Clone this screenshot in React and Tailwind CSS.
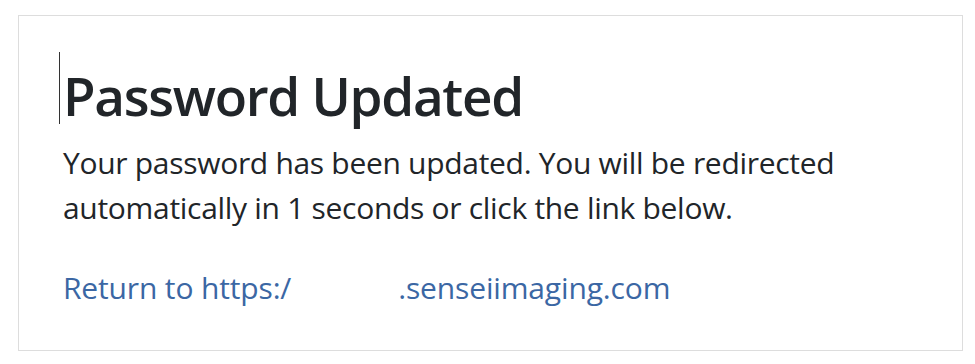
export default function App() {
  return (
    <div className="min-h-screen bg-white pt-[15px] pl-[18px] pr-[12px]" style={{ fontFamily: '"Open Sans", "Noto Sans", sans-serif' }}>
      <div className="border border-[#dddddd] h-[336px] pl-[44px] pt-[46px]">
        <div className="flex items-start">
          <span className="w-px h-[72px] bg-[#333] mr-[3px] -ml-[4px] -mt-[10px]" />
          <h1 className="text-[53px] leading-[67px] font-semibold text-[#212529] tracking-[-1.3px]">
            Password Updated
          </h1>
        </div>
        <p className="mt-[11px] text-[30px] leading-[45px] text-[#212529] tracking-[-0.3px]">
          Your password has been updated. You will be redirected
          <br />
          automatically in 1 seconds or click the link below.
        </p>
        <p className="mt-[35px] text-[30px] leading-[45px] tracking-[-0.15px]">
          <a href="#" className="text-[#3b67a4]">
            Return to https:/<span className="inline-block w-[107px]" />.senseiimaging.com
          </a>
        </p>
      </div>
    </div>
  );
}
